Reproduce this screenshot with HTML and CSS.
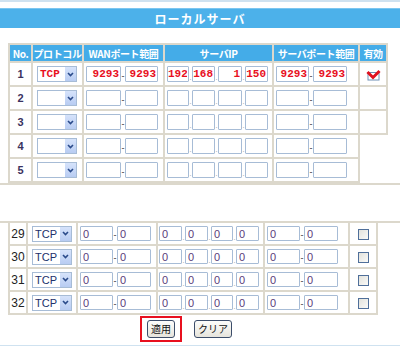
FILE: index.html
```html
<!DOCTYPE html>
<html>
<head>
	<title>ローカルサーバ</title>
	<link rel="stylesheet" href="styles.css">
</head>
<body>

	<!-- top area: title and first rows -->
	<div class="topline"></div>
	<div class="titlebar">ローカルサーバ</div>

	<table class="grid big">
		<colgroup>
			<col style="width:23px"><col style="width:51px"><col style="width:81px">
			<col style="width:109px"><col style="width:86px"><col style="width:28px">
		</colgroup>
		<tr class="head">
			<th>No.</th>
			<th>プロトコル</th>
			<th>WANポート範囲</th>
			<th>サーバIP</th>
			<th>サーバポート範囲</th>
			<th>有効</th>
		</tr>
		<tr>
			<td class="no">1</td>
			<td class="mark"><div class="sel red"><span class="val">TCP</span><span class="arr"><svg width="7" height="5" viewBox="0 0 7 5"><path d="M1 1 L3.5 3.5 L6 1" fill="none" stroke="#2a4a8a" stroke-width="1.6"/></svg></span></div></td>
			<td><div class="fld wan"><input class="w35 red" value="9293"><span class="sep">-</span><input class="w33 red" value="9293"></div></td>
			<td><div class="fld ip"><input class="w22 red" value="192"><span class="dot">.</span><input class="w23 red" value="168"><span class="dot">.</span><input class="w24 red" value="1"><span class="dot">.</span><input class="w23 red" value="150"></div></td>
			<td><div class="fld srv"><input class="w33 red" value="9293"><span class="sep">-</span><input class="w34 red" value="9293"></div></td>
			<td class="chk"><svg width="15" height="12" viewBox="0 0 15 12"><rect x="2" y="3.5" width="11" height="7.5" fill="#fff" stroke="#6f8fb5"/><path d="M1.5 3 L7 8.5 L13.5 2" fill="none" stroke="#e0101e" stroke-width="3"/></svg></td>
		</tr>
		<tr>
			<td class="no">2</td>
			<td class="mark short"><div class="sel"><span class="val"></span><span class="arr"><svg width="7" height="5" viewBox="0 0 7 5"><path d="M1 1 L3.5 3.5 L6 1" fill="none" stroke="#2a4a8a" stroke-width="1.6"/></svg></span></div></td>
			<td><div class="fld wan"><input class="w35"><span class="sep">-</span><input class="w33"></div></td>
			<td><div class="fld ip"><input class="w22"><span class="dot">.</span><input class="w23"><span class="dot">.</span><input class="w24"><span class="dot">.</span><input class="w23"></div></td>
			<td><div class="fld srv"><input class="w33"><span class="sep">-</span><input class="w34"></div></td>
			<td class="chk"></td>
		</tr>
		<tr>
			<td class="no">3</td>
			<td><div class="sel"><span class="val"></span><span class="arr"><svg width="7" height="5" viewBox="0 0 7 5"><path d="M1 1 L3.5 3.5 L6 1" fill="none" stroke="#2a4a8a" stroke-width="1.6"/></svg></span></div></td>
			<td><div class="fld wan"><input class="w35"><span class="sep">-</span><input class="w33"></div></td>
			<td><div class="fld ip"><input class="w22"><span class="dot">.</span><input class="w23"><span class="dot">.</span><input class="w24"><span class="dot">.</span><input class="w23"></div></td>
			<td><div class="fld srv"><input class="w33"><span class="sep">-</span><input class="w34"></div></td>
			<td class="chk"></td>
		</tr>
		<tr>
			<td class="no">4</td>
			<td><div class="sel"><span class="val"></span><span class="arr"><svg width="7" height="5" viewBox="0 0 7 5"><path d="M1 1 L3.5 3.5 L6 1" fill="none" stroke="#2a4a8a" stroke-width="1.6"/></svg></span></div></td>
			<td><div class="fld wan"><input class="w35"><span class="sep">-</span><input class="w33"></div></td>
			<td><div class="fld ip"><input class="w22"><span class="dot">.</span><input class="w23"><span class="dot">.</span><input class="w24"><span class="dot">.</span><input class="w23"></div></td>
			<td><div class="fld srv"><input class="w33"><span class="sep">-</span><input class="w34"></div></td>
			<td class="chk blank"></td>
		</tr>
		<tr>
			<td class="no">5</td>
			<td><div class="sel"><span class="val"></span><span class="arr"><svg width="7" height="5" viewBox="0 0 7 5"><path d="M1 1 L3.5 3.5 L6 1" fill="none" stroke="#2a4a8a" stroke-width="1.6"/></svg></span></div></td>
			<td><div class="fld wan"><input class="w35"><span class="sep">-</span><input class="w33"></div></td>
			<td><div class="fld ip"><input class="w22"><span class="dot">.</span><input class="w23"><span class="dot">.</span><input class="w24"><span class="dot">.</span><input class="w23"></div></td>
			<td><div class="fld srv"><input class="w33"><span class="sep">-</span><input class="w34"></div></td>
			<td class="chk blank"></td>
		</tr>
	</table>

	<div class="cut"></div>
	<div class="gap"></div>
	<div class="cut"></div>

	<!-- bottom area: last rows and buttons -->
	<table class="grid small">
		<colgroup>
			<col style="width:18px"><col style="width:50px"><col style="width:80px">
			<col style="width:107px"><col style="width:85px"><col style="width:28px">
		</colgroup>
		<tr>
			<td class="no">29</td>
			<td><div class="sel"><span class="val">TCP</span><span class="arr"><svg width="7" height="5" viewBox="0 0 7 5"><path d="M1 1 L3.5 3.5 L6 1" fill="none" stroke="#2a4a8a" stroke-width="1.6"/></svg></span></div></td>
			<td><div class="fld wan"><input class="w33" value="0"><span class="sep">-</span><input class="w34" value="0"></div></td>
			<td><div class="fld ip"><input class="w23" value="0"><span class="dot">.</span><input class="w23" value="0"><span class="dot">.</span><input class="w22" value="0"><span class="dot">.</span><input class="w23" value="0"></div></td>
			<td><div class="fld srv"><input class="w33" value="0"><span class="sep">-</span><input class="w34" value="0"></div></td>
			<td class="chk"><span class="box"></span></td>
		</tr>
		<tr>
			<td class="no">30</td>
			<td><div class="sel"><span class="val">TCP</span><span class="arr"><svg width="7" height="5" viewBox="0 0 7 5"><path d="M1 1 L3.5 3.5 L6 1" fill="none" stroke="#2a4a8a" stroke-width="1.6"/></svg></span></div></td>
			<td><div class="fld wan"><input class="w33" value="0"><span class="sep">-</span><input class="w34" value="0"></div></td>
			<td><div class="fld ip"><input class="w23" value="0"><span class="dot">.</span><input class="w23" value="0"><span class="dot">.</span><input class="w22" value="0"><span class="dot">.</span><input class="w23" value="0"></div></td>
			<td><div class="fld srv"><input class="w33" value="0"><span class="sep">-</span><input class="w34" value="0"></div></td>
			<td class="chk"><span class="box"></span></td>
		</tr>
		<tr>
			<td class="no">31</td>
			<td><div class="sel"><span class="val">TCP</span><span class="arr"><svg width="7" height="5" viewBox="0 0 7 5"><path d="M1 1 L3.5 3.5 L6 1" fill="none" stroke="#2a4a8a" stroke-width="1.6"/></svg></span></div></td>
			<td><div class="fld wan"><input class="w33" value="0"><span class="sep">-</span><input class="w34" value="0"></div></td>
			<td><div class="fld ip"><input class="w23" value="0"><span class="dot">.</span><input class="w23" value="0"><span class="dot">.</span><input class="w22" value="0"><span class="dot">.</span><input class="w23" value="0"></div></td>
			<td><div class="fld srv"><input class="w33" value="0"><span class="sep">-</span><input class="w34" value="0"></div></td>
			<td class="chk"><span class="box"></span></td>
		</tr>
		<tr>
			<td class="no">32</td>
			<td><div class="sel"><span class="val">TCP</span><span class="arr"><svg width="7" height="5" viewBox="0 0 7 5"><path d="M1 1 L3.5 3.5 L6 1" fill="none" stroke="#2a4a8a" stroke-width="1.6"/></svg></span></div></td>
			<td><div class="fld wan"><input class="w33" value="0"><span class="sep">-</span><input class="w34" value="0"></div></td>
			<td><div class="fld ip"><input class="w23" value="0"><span class="dot">.</span><input class="w23" value="0"><span class="dot">.</span><input class="w22" value="0"><span class="dot">.</span><input class="w23" value="0"></div></td>
			<td><div class="fld srv"><input class="w33" value="0"><span class="sep">-</span><input class="w34" value="0"></div></td>
			<td class="chk"><span class="box"></span></td>
		</tr>
	</table>

	<div class="buttons">
		<span class="hilite"><button class="btn">適用</button></span>
		<button class="btn">クリア</button>
	</div>
	<div class="bottomline"></div>

</body>
</html>
```

FILE: styles.css
```css
/* page */
body {
	margin: 0;
	font-family: "Liberation Sans", "Noto Sans CJK JP", sans-serif;
	font-size: 11px;
	color: #333;
	background: #fff;
}

.topline {
	height: 2px;
	background-color: #cfe2f0;
	margin-bottom: 6px;
}

.titlebar {
	height: 19px;
	line-height: 19px;
	background-color: #4cb1ea;
	border-top: 1px solid #7cc6f0;
	color: #fff;
	font-family: "Noto Sans CJK JP", sans-serif;
	font-weight: bold;
	font-size: 12px;
	text-align: center;
	letter-spacing: 1px;
	margin-bottom: 15px;
}

/* tables */
.grid {
	border-collapse: collapse;
	table-layout: fixed;
	margin-left: 8px;
}

.grid.big {
	width: 378px;
}

.grid.small {
	width: 368px;
	margin-top: -2px;
}

.grid th,
.grid td {
	border: 2px solid #dcd8cc;
	padding: 0;
}

.grid .head th {
	height: 16px;
	background-color: #44ace8;
	color: #fff;
	font-family: "Noto Sans CJK JP", sans-serif;
	font-size: 10px;
	font-weight: bold;
	white-space: nowrap;
	overflow: hidden;
	letter-spacing: -0.4px;
}

.grid.big td {
	height: 22px;
}

.grid.small td {
	height: 21px;
}

.grid td.no {
	text-align: center;
	color: #3a3260;
	font-weight: bold;
}

.grid.small td.no {
	font-weight: normal;
	color: #222;
	font-size: 12px;
}

.grid td.mark {
	border-left-color: #e8202a;
}

.grid td.chk {
	text-align: center;
	vertical-align: middle;
}

.grid td.chk svg {
	display: block;
	margin: 1px auto 0;
}

.grid td.blank {
	border-bottom-color: #fff;
	border-right-color: #fff;
}

/* select look-alike */
.sel {
	display: flex;
	align-items: stretch;
	width: 38px;
	height: 14px;
	margin-left: 4px;
	border: 1px solid #a7bcd6;
	background: #fff;
}

.sel .val {
	flex: 1;
	line-height: 14px;
	padding-left: 2px;
	color: #22306a;
	font-size: 11px;
}

.sel.red .val {
	color: #e8101e;
	font-family: "Liberation Mono", monospace;
	font-size: 11px;
	font-weight: bold;
}

.sel .arr {
	width: 11px;
	display: flex;
	align-items: center;
	justify-content: center;
	background: linear-gradient(#d6e3fb, #b8ccf2);
	border-left: 1px solid #fff;
}

/* inputs */
.fld {
	display: flex;
	align-items: center;
	padding-left: 2px;
}

.small .fld.ip {
	padding-left: 1px;
}

.fld input {
	box-sizing: border-box;
	height: 15px;
	margin: 0;
	padding: 0 2px;
	border: 1px solid #a7bcd6;
	border-radius: 1px;
	font-family: "Liberation Sans", sans-serif;
	font-size: 11px;
	color: #5a3c7a;
	outline: none;
}

.big .fld input {
	height: 16px;
}

.fld input.red {
	color: #e8101e;
	text-align: right;
	font-family: "Liberation Mono", monospace;
	font-size: 11px;
	font-weight: bold;
	padding: 0 1px 0 0;
}

.fld .sep {
	width: 4px;
	text-align: center;
	font-size: 9px;
	line-height: 1;
	margin-top: 4px;
	color: #333;
}

.fld .dot {
	width: 3px;
	text-align: center;
	font-size: 9px;
	color: #bbb;
	margin-top: 6px;
}

.w22 { width: 22px; }
.w23 { width: 23px; }
.w24 { width: 24px; }
.w33 { width: 33px; }
.w34 { width: 34px; }
.w35 { width: 35px; }

.box {
	display: inline-block;
	width: 9px;
	height: 9px;
	border: 1px solid #4f6f9a;
	background: linear-gradient(135deg, #e2e2dc, #fafaf8);
	vertical-align: middle;
}

/* cut lines between the two parts */
.cut {
	height: 0;
	border-top: 2px solid #dcd8cc;
}

.gap {
	height: 36px;
}

/* buttons */
.buttons {
	display: flex;
	align-items: center;
	padding-left: 140px;
	height: 27px;
}

.hilite {
	display: inline-block;
	border: 2px solid #e8101e;
	padding: 2px 5px;
	margin-right: 12px;
}

.btn {
	height: 18px;
	padding: 0 3px;
	font-family: "Noto Sans CJK JP", sans-serif;
	font-size: 10px;
	line-height: 14px;
	color: #111;
	background: linear-gradient(#fdfdfb, #e6e4dc);
	border: 1px solid #3c4d6a;
	border-radius: 3px;
}

.bottomline {
	margin-top: 3px;
	height: 1px;
	background-color: #cfe2f0;
}
```
